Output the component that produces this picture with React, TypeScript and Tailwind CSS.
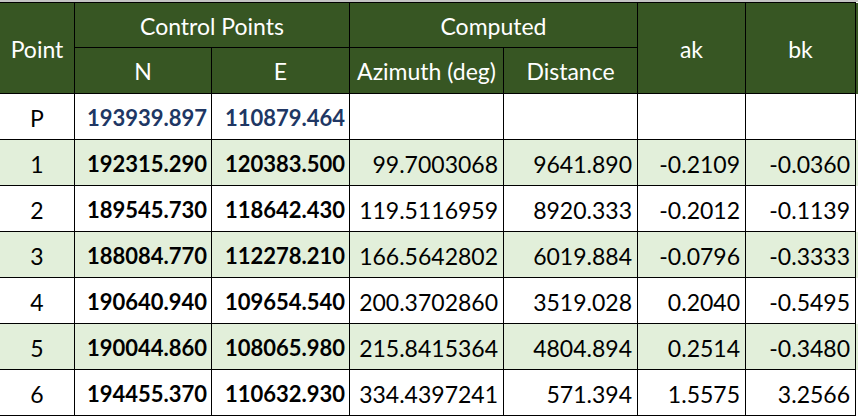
import React from 'react'

const rows = [
  { id: '1', n: '192315.290', e: '120383.500', az: '99.7003068', dist: '9641.890', ak: '-0.2109', bk: '-0.0360' },
  { id: '2', n: '189545.730', e: '118642.430', az: '119.5116959', dist: '8920.333', ak: '-0.2012', bk: '-0.1139' },
  { id: '3', n: '188084.770', e: '112278.210', az: '166.5642802', dist: '6019.884', ak: '-0.0796', bk: '-0.3333' },
  { id: '4', n: '190640.940', e: '109654.540', az: '200.3702860', dist: '3519.028', ak: '0.2040', bk: '-0.5495' },
  { id: '5', n: '190044.860', e: '108065.980', az: '215.8415364', dist: '4804.894', ak: '0.2514', bk: '-0.3480' },
  { id: '6', n: '194455.370', e: '110632.930', az: '334.4397241', dist: '571.394', ak: '1.5575', bk: '3.2566' },
]

export default function App() {
  const th = 'border border-black bg-[#375623] text-white font-normal text-center align-middle p-0 pt-[2px]'
  const td = 'border border-black text-right align-middle px-[5px] pt-[3px] pb-0'
  const bold = 'font-bold text-[22px] pr-[4px]'

  return (
    <div className="w-[858px] h-[418px] overflow-hidden bg-white font-['Lato','Liberation_Sans',sans-serif] text-[23px] leading-none">
      {/* strip of the sheet's column headers */}
      <div className="h-[2px] bg-[#c4c4c4]" />
      <table className="table-fixed border-collapse w-[866px] -ml-px">
        <colgroup>
          <col className="w-[75px]" />
          <col className="w-[137px]" />
          <col className="w-[138px]" />
          <col className="w-[154px]" />
          <col className="w-[134px]" />
          <col className="w-[108px]" />
          <col className="w-[110px]" />
          <col className="w-[10px]" />
        </colgroup>
        <thead>
          <tr className="h-[45px]">
            <th rowSpan={2} className={th}>Point</th>
            <th colSpan={2} className={th}>Control Points</th>
            <th colSpan={2} className={th}>Computed</th>
            <th rowSpan={2} className={th}>ak</th>
            <th rowSpan={2} className={th}>bk</th>
            <th rowSpan={2} className="bg-[#375623] p-0" />
          </tr>
          <tr className="h-[46px]">
            <th className={th}>N</th>
            <th className={th}>E</th>
            <th className={th}>Azimuth (deg)</th>
            <th className={th}>Distance</th>
          </tr>
        </thead>
        <tbody>
          <tr className="h-[46px]">
            <td className="border border-black text-center align-middle p-0 pt-[3px]">P</td>
            <td className={`${td} ${bold} text-[#203764]`}>193939.897</td>
            <td className={`${td} ${bold} text-[#203764]`}>110879.464</td>
            <td className={td} />
            <td className={td} />
            <td className={td} />
            <td className={td} />
            <td className="p-0" />
          </tr>
          {rows.map((r, i) => {
            const bg = i % 2 === 0 ? 'bg-[#e2efda]' : 'bg-white'
            return (
              <tr key={r.id} className={`h-[46px] ${bg}`}>
                <td className="border border-black text-center align-middle p-0 pt-[3px]">{r.id}</td>
                <td className={`${td} ${bold}`}>{r.n}</td>
                <td className={`${td} ${bold}`}>{r.e}</td>
                <td className={td}>{r.az}</td>
                <td className={td}>{r.dist}</td>
                <td className={td}>{r.ak}</td>
                <td className={td}>{r.bk}</td>
                <td className="p-0" />
              </tr>
            )
          })}
        </tbody>
      </table>
    </div>
  )
}
